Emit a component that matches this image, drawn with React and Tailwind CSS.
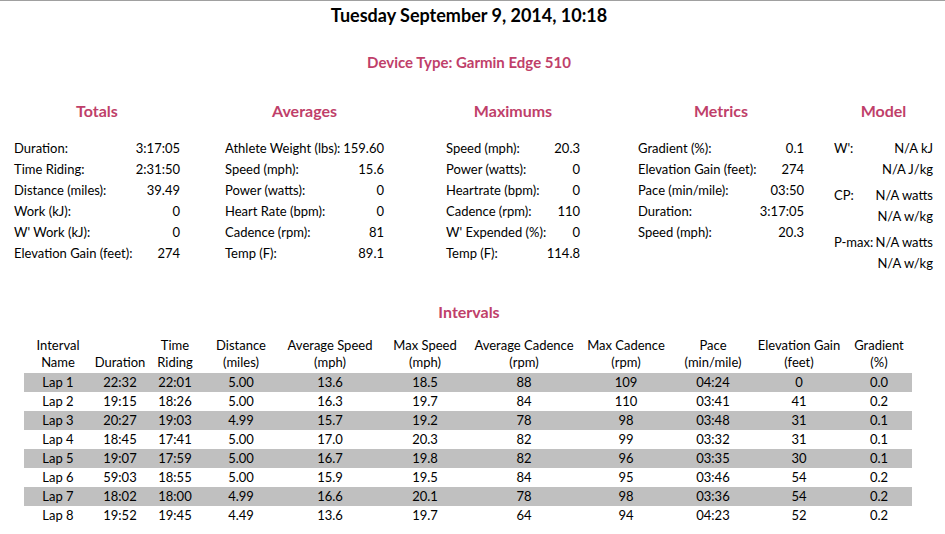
import React from "react";

const PINK = "text-[#bf3f6a]";

const totals = [
  ["Duration:", "3:17:05"],
  ["Time Riding:", "2:31:50"],
  ["Distance (miles):", "39.49"],
  ["Work (kJ):", "0"],
  ["W' Work (kJ):", "0"],
  ["Elevation Gain (feet):", "274"],
];
const averages = [
  ["Athlete Weight (lbs):", "159.60"],
  ["Speed (mph):", "15.6"],
  ["Power (watts):", "0"],
  ["Heart Rate (bpm):", "0"],
  ["Cadence (rpm):", "81"],
  ["Temp (F):", "89.1"],
];
const maximums = [
  ["Speed (mph):", "20.3"],
  ["Power (watts):", "0"],
  ["Heartrate (bpm):", "0"],
  ["Cadence (rpm):", "110"],
  ["W' Expended (%):", "0"],
  ["Temp (F):", "114.8"],
];
const metrics = [
  ["Gradient (%):", "0.1"],
  ["Elevation Gain (feet):", "274"],
  ["Pace (min/mile):", "03:50"],
  ["Duration:", "3:17:05"],
  ["Speed (mph):", "20.3"],
];
const model = [
  ["W':", "N/A kJ", "N/A J/kg"],
  ["CP:", "N/A watts", "N/A w/kg"],
  ["P-max:", "N/A watts", "N/A w/kg"],
];

const laps = [
  ["Lap 1", "22:32", "22:01", "5.00", "13.6", "18.5", "88", "109", "04:24", "0", "0.0"],
  ["Lap 2", "19:15", "18:26", "5.00", "16.3", "19.7", "84", "110", "03:41", "41", "0.2"],
  ["Lap 3", "20:27", "19:03", "4.99", "15.7", "19.2", "78", "98", "03:48", "31", "0.1"],
  ["Lap 4", "18:45", "17:41", "5.00", "17.0", "20.3", "82", "99", "03:32", "31", "0.1"],
  ["Lap 5", "19:07", "17:59", "5.00", "16.7", "19.8", "82", "96", "03:35", "30", "0.1"],
  ["Lap 6", "59:03", "18:55", "5.00", "15.9", "19.5", "84", "95", "03:46", "54", "0.2"],
  ["Lap 7", "18:02", "18:00", "4.99", "16.6", "20.1", "78", "98", "03:36", "54", "0.2"],
  ["Lap 8", "19:52", "19:45", "4.49", "13.6", "19.7", "64", "94", "04:23", "52", "0.2"],
];

const headers = [
  ["Interval", "Name"],
  [null, "Duration"],
  ["Time", "Riding"],
  ["Distance", "(miles)"],
  ["Average Speed", "(mph)"],
  ["Max Speed", "(mph)"],
  ["Average Cadence", "(rpm)"],
  ["Max Cadence", "(rpm)"],
  ["Pace", "(min/mile)"],
  ["Elevation Gain", "(feet)"],
  ["Gradient", "(%)"],
];

const colWidths = [68, 56, 54, 78, 100, 90, 108, 96, 78, 94, 66];

function Section({ title, rows, width }) {
  return (
    <div style={{ width }} className="shrink-0">
      <div className={`text-center font-bold text-[16px] leading-[20px] ${PINK}`}>{title}</div>
      <div className="mt-[17px] flex flex-col">
        {rows.map(([l, v]) => (
          <div key={l} className="flex justify-between items-center h-[21px] whitespace-nowrap">
            <span>{l}</span>
            <span>{v}</span>
          </div>
        ))}
      </div>
    </div>
  );
}

export default function App() {
  return (
    <div className="w-[945px] h-[534px] overflow-hidden bg-white border-t border-[#a0a0a0] text-black text-[13px] font-['Lato',sans-serif]">
      <div className="pt-[3px] pr-[7px] text-center font-bold text-[18px] leading-[22px]">
        Tuesday September 9, 2014, 10:18
      </div>
      <div className={`mt-[27px] pr-[7px] text-center font-bold text-[15px] leading-[18px] ${PINK}`}>
        Device Type: Garmin Edge 510
      </div>

      <div className="mt-[30px] flex pl-[14px]">
        <Section title="Totals" rows={totals} width={166} />
        <div className="w-[45px] shrink-0" />
        <Section title="Averages" rows={averages} width={159} />
        <div className="w-[62px] shrink-0" />
        <Section title="Maximums" rows={maximums} width={134} />
        <div className="w-[58px] shrink-0" />
        <Section title="Metrics" rows={metrics} width={166} />
        <div className="w-[30px] shrink-0" />
        <div className="w-[99px] shrink-0">
          <div className={`text-center font-bold text-[16px] leading-[20px] ${PINK}`}>Model</div>
          <div className="mt-[17px] flex flex-col gap-[5px]">
            {model.map(([l, v1, v2]) => (
              <div key={l} className="flex flex-col whitespace-nowrap">
                <div className="flex justify-between items-center h-[21px]">
                  <span>{l}</span>
                  <span>{v1}</span>
                </div>
                <div className="flex justify-end items-center h-[21px]">
                  <span>{v2}</span>
                </div>
              </div>
            ))}
          </div>
        </div>
      </div>

      <div className={`mt-[28px] pr-[7px] text-center font-bold text-[16px] leading-[20px] ${PINK}`}>
        Intervals
      </div>

      <div className="mt-[15px] pl-[24px]">
        <table className="table-fixed border-collapse w-[888px]">
          <colgroup>
            {colWidths.map((w, i) => (
              <col key={i} style={{ width: w }} />
            ))}
          </colgroup>
          <thead>
            <tr>
              {headers.map(([a, b], i) => (
                <th
                  key={i}
                  className="font-normal text-center align-bottom h-[36px] pb-[2px] leading-[17px] whitespace-nowrap p-0"
                >
                  {a && <div>{a}</div>}
                  <div>{b}</div>
                </th>
              ))}
            </tr>
          </thead>
          <tbody>
            {laps.map((row, ri) => (
              <tr key={ri} className={ri % 2 === 0 ? "bg-[#c0c0c0]" : "bg-white"}>
                {row.map((c, ci) => (
                  <td key={ci} className="h-[19px] p-0 text-center leading-[19px] whitespace-nowrap">
                    {c}
                  </td>
                ))}
              </tr>
            ))}
          </tbody>
        </table>
      </div>
    </div>
  );
}
